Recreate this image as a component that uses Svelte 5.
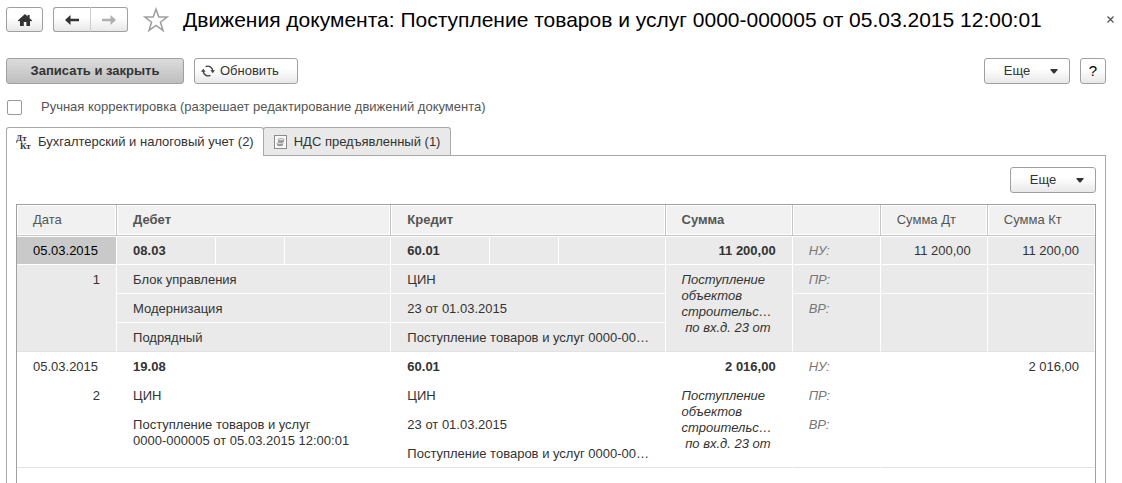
<script lang="ts">
    type Entry = {
        num: number;
        date: string;
        debit: string[];
        credit: string[];
        sum: string;
        comment: string;
        sumDt: string;
        sumKt: string;
    };

    const comment = "Поступление\nобъектов\nстроительс…\n по вх.д. 23 от";

    const entries: Entry[] = [
        {
            num: 1,
            date: "05.03.2015",
            debit: ["08.03", "Блок управления", "Модернизация", "Подрядный"],
            credit: [
                "60.01",
                "ЦИН",
                "23 от 01.03.2015",
                "Поступление товаров и услуг 0000-00…",
            ],
            sum: "11 200,00",
            comment,
            sumDt: "11 200,00",
            sumKt: "11 200,00",
        },
        {
            num: 2,
            date: "05.03.2015",
            debit: [
                "19.08",
                "ЦИН",
                "Поступление товаров и услуг\n0000-000005 от 05.03.2015 12:00:01",
            ],
            credit: [
                "60.01",
                "ЦИН",
                "23 от 01.03.2015",
                "Поступление товаров и услуг 0000-00…",
            ],
            sum: "2 016,00",
            comment,
            sumDt: "",
            sumKt: "2 016,00",
        },
    ];

    let manual = $state(false);
    let tab = $state(0);
    let selected = $state(1);
</script>

{#snippet more()}
    <button type="button" class="btn more">
        Еще
        <svg width="8" height="5" viewBox="0 0 8 5" aria-hidden="true">
            <path d="M0.5 0h7v1L4.5 4.5h-1L0.5 1z" fill="#333" />
        </svg>
    </button>
{/snippet}

<div class="page">
    <header class="titlebar">
        <button type="button" class="btn home" aria-label="Домой">
            <svg width="16" height="14" viewBox="0 0 16 14">
                <path
                    d="M8 1 0.8 7.6 2 8.6 3 7.8V13h3.8V9h2.6v4H13V7.8l1 .8 1.2-1L12.6 5.2V2h-2v1.4z"
                    fill="#333"
                />
            </svg>
        </button>
        <div class="nav">
            <button type="button" class="btn" aria-label="Назад">
                <svg width="16" height="12" viewBox="0 0 16 12">
                    <path d="M1 6 6.5 1 6.5 4.8H15V7.2H6.5V11z" fill="#333" />
                </svg>
            </button>
            <button type="button" class="btn" aria-label="Вперед">
                <svg width="16" height="12" viewBox="0 0 16 12">
                    <path d="M15 6 9.5 1V4.8H1V7.2H9.5V11z" fill="#b0b0b0" />
                </svg>
            </button>
        </div>
        <button type="button" class="plain star" aria-label="В избранное">
            <svg width="26" height="26" viewBox="0 0 26 26">
                <path
                    d="M13 2.2 15.8 10H24L17.5 15.2 20 23.4 13 18.4 6 23.4 8.5 15.2 2 10H10.2z"
                    fill="#fff"
                    stroke="#a0a0a0"
                    stroke-width="1.6"
                />
            </svg>
        </button>
        <h1>
            Движения документа: Поступление товаров и услуг 0000-000005 от
            05.03.2015 12:00:01
        </h1>
        <button type="button" class="plain close" aria-label="Закрыть">
            <svg width="7" height="7" viewBox="0 0 7 7">
                <path d="M.5.5l6 6M6.5.5l-6 6" stroke="#555" stroke-width="1.3" />
            </svg>
        </button>
    </header>

    <div class="content">
        <div class="toolbar">
            <button type="button" class="btn save">Записать и закрыть</button>
            <button type="button" class="btn refresh">
                <svg width="14" height="12" viewBox="0 0 14 12" aria-hidden="true">
                    <path
                        d="M4.6 1.7A5 5 0 0 1 11.8 6M9.4 10.3A5 5 0 0 1 2.2 6"
                        fill="none"
                        stroke="#444"
                        stroke-width="1.4"
                    />
                    <path d="M9.4 5.2H14L11.7 8.2zM0 6.8H4.6L2.3 3.8z" fill="#444" />
                </svg>
                Обновить
            </button>
            <span class="spacer"></span>
            {@render more()}
            <button type="button" class="btn help">?</button>
        </div>

        <label class="manual">
            <input type="checkbox" bind:checked={manual} />
            <span>
                Ручная корректировка (разрешает редактирование движений
                документа)
            </span>
        </label>

        <div class="tabs" role="tablist">
            <button
                type="button"
                role="tab"
                class="tab"
                class:active={tab === 0}
                aria-selected={tab === 0}
                onclick={() => (tab = 0)}
            >
                <svg width="16" height="16" viewBox="0 0 16 16" aria-hidden="true">
                    <text class="dtkt" x="0" y="7">Дт</text>
                    <text class="dtkt" x="4" y="15">Кт</text>
                </svg>
                Бухгалтерский и налоговый учет (2)
            </button>
            <button
                type="button"
                role="tab"
                class="tab"
                class:active={tab === 1}
                aria-selected={tab === 1}
                onclick={() => (tab = 1)}
            >
                <svg width="13" height="14" viewBox="0 0 13 14" aria-hidden="true">
                    <rect x=".5" y=".5" width="12" height="13" fill="#f8f8f8" stroke="#8c8c8c" />
                    <path d="M3 8.5v1.6c0 1.6 6 1.6 6 0V8.5z" fill="#999" />
                    <ellipse cx="6" cy="8.4" rx="3" ry="1.1" fill="#ddd" stroke="#888" stroke-width=".6" />
                    <path d="M4 4.5v2c0 1.6 6 1.6 6 0v-2z" fill="#999" />
                    <ellipse cx="7" cy="4.6" rx="3" ry="1.2" fill="#e4e4e4" stroke="#888" stroke-width=".6" />
                </svg>
                НДС предъявленный (1)
            </button>
        </div>

        <main class="panel">
            <div class="panel-bar">{@render more()}</div>

            <div class="grid">
                <table>
                    <colgroup>
                        <col class="c-date" />
                        <col class="c-acc" />
                        <col class="c-qty" />
                        <col class="c-cur" />
                        <col class="c-acc" />
                        <col class="c-qty" />
                        <col class="c-cur" />
                        <col class="c-sum" />
                        <col class="c-kind" />
                        <col class="c-tax" />
                        <col class="c-tax" />
                    </colgroup>
                    <thead>
                        <tr>
                            <th>Дата</th>
                            <th class="main" colspan="3">Дебет</th>
                            <th class="main" colspan="3">Кредит</th>
                            <th class="main">Сумма</th>
                            <th></th>
                            <th>Сумма Дт</th>
                            <th>Сумма Кт</th>
                        </tr>
                    </thead>
                    {#each entries as e}
                        <tbody
                            class:selected={selected === e.num}
                            onclick={() => (selected = e.num)}
                        >
                            <tr>
                                <td class="date">{e.date}</td>
                                <td class="bold">{e.debit[0]}</td>
                                <td></td>
                                <td></td>
                                <td class="bold">{e.credit[0]}</td>
                                <td></td>
                                <td></td>
                                <td class="bold num">{e.sum}</td>
                                <td class="kind">НУ:</td>
                                <td class="num">{e.sumDt}</td>
                                <td class="num">{e.sumKt}</td>
                            </tr>
                            <tr>
                                <td class="num" rowspan="3">{e.num}</td>
                                <td colspan="3">{e.debit[1]}</td>
                                <td colspan="3">{e.credit[1]}</td>
                                <td class="comment" rowspan="3">{e.comment}</td>
                                <td class="kind">ПР:</td>
                                <td></td>
                                <td></td>
                            </tr>
                            <tr>
                                <td colspan="3" rowspan={e.debit[3] ? 1 : 2}>{e.debit[2]}</td>
                                <td colspan="3">{e.credit[2]}</td>
                                <td class="kind" rowspan="2">ВР:</td>
                                <td rowspan="2"></td>
                                <td rowspan="2"></td>
                            </tr>
                            <tr>
                                {#if e.debit[3]}
                                    <td colspan="3">{e.debit[3]}</td>
                                {/if}
                                <td colspan="3">{e.credit[3]}</td>
                            </tr>
                        </tbody>
                    {/each}
                </table>
            </div>
        </main>
    </div>
</div>

<style>
    :global(body) {
        margin: 0;
        background: #fff;
        color: #333;
        font: 13px/16px "Liberation Sans", Arial, sans-serif;
    }

    .page {
        display: flex;
        flex-direction: column;
        min-height: 100vh;
        box-sizing: border-box;
        padding: 7px 8px 0 6px;
    }

    .titlebar {
        display: flex;
        align-items: center;
        height: 25px;
    }

    h1 {
        flex: 1;
        margin: 0 0 0 14px;
        color: #000;
        font-size: 21px;
        font-weight: 400;
        line-height: 24px;
        white-space: nowrap;
    }

    button {
        font: inherit;
        color: inherit;
        cursor: pointer;
    }

    .plain {
        display: flex;
        padding: 0;
        border: none;
        background: none;
    }

    .btn {
        display: flex;
        align-items: center;
        justify-content: center;
        box-sizing: border-box;
        height: 26px;
        padding: 0;
        border: 1px solid #a0a0a0;
        border-radius: 3px;
        background: linear-gradient(#fff 40%, #e8e8e8);
        white-space: nowrap;
    }

    .home {
        width: 37px;
        height: 25px;
    }

    .nav {
        display: flex;
        margin-left: 10px;
    }

    .nav .btn {
        width: 37px;
        height: 25px;
    }

    .nav .btn:first-child {
        width: 38px;
        border-right-color: #ccc;
        border-radius: 3px 0 0 3px;
    }

    .nav .btn:last-child {
        border-left: none;
        border-radius: 0 3px 3px 0;
    }

    .star {
        margin-left: 15px;
    }

    .content {
        display: flex;
        flex: 1;
        flex-direction: column;
        margin-right: 8px;
    }

    .toolbar {
        display: flex;
        gap: 10px;
        margin-top: 26px;
    }

    .save {
        width: 178px;
        background: linear-gradient(#dcdcdc, #bebebe);
        font-weight: 700;
    }

    .refresh {
        justify-content: flex-start;
        gap: 5px;
        width: 104px;
        padding-left: 6px;
    }

    .spacer {
        flex: 1;
    }

    .more {
        gap: 20px;
        width: 86px;
        padding-left: 8px;
    }

    .help {
        width: 26px;
        color: #000;
        font-size: 15px;
    }

    .manual {
        display: flex;
        align-items: center;
        gap: 19px;
        align-self: flex-start;
        margin-top: 15px;
        color: #555;
    }

    .manual input {
        appearance: none;
        box-sizing: border-box;
        width: 15px;
        height: 15px;
        margin: 0 0 0 1px;
        border: 1px solid #999;
        border-radius: 2px;
        background: #fff;
    }

    .manual input:checked {
        background: #999;
    }

    .tabs {
        display: flex;
        margin-top: 12px;
    }

    .tab {
        display: flex;
        align-items: center;
        gap: 7px;
        box-sizing: border-box;
        height: 28px;
        margin-right: -1px;
        padding: 0 10px;
        border: 1px solid #a9a9a9;
        border-bottom: none;
        border-radius: 3px 3px 0 0;
        background: #e9e9e9;
        white-space: nowrap;
    }

    /* covers the top border of the panel */
    .tab.active {
        position: relative;
        gap: 6px;
        height: 29px;
        margin-bottom: -1px;
        padding: 0 9px;
        background: #fff;
    }

    .dtkt {
        fill: #333;
        font: bold 9px "Liberation Serif", serif;
    }

    .panel {
        flex: 1;
        display: flex;
        flex-direction: column;
        padding: 11px 9px 0;
        border: 1px solid #a9a9a9;
        border-bottom: none;
    }

    .panel-bar {
        display: flex;
        justify-content: flex-end;
        margin-bottom: 11px;
    }

    .grid {
        flex: 1;
        border: 1px solid #a0a0a0;
        border-bottom: none;
    }

    table {
        width: 100%;
        border-spacing: 0;
        table-layout: fixed;
    }

    .c-date {
        width: 100px;
    }

    .c-acc {
        width: 99px;
    }

    .c-qty {
        width: 69px;
    }

    .c-cur {
        width: 106px;
    }

    .c-sum {
        width: 127px;
    }

    .c-kind {
        width: 88px;
    }

    .c-tax {
        width: 107px;
    }

    th,
    td {
        box-sizing: border-box;
        text-align: left;
        vertical-align: top;
        white-space: pre;
    }

    th {
        height: 31px;
        padding: 7px 16px;
        border-right: 1px solid #c6c6c6;
        border-bottom: 1px solid #c6c6c6;
        background: #f1f1f1;
        box-shadow: inset 0 0 0 1px #fff;
        color: #555;
        font-weight: 400;
    }

    th:last-child,
    td.num:last-child {
        border-right: none;
    }

    th.main {
        font-weight: 700;
    }

    td {
        height: 29px;
        padding: 7px 16px 5px;
        border-right: 1px solid #fff;
        border-bottom: 1px solid #fff;
    }

    /* white gap under the header */
    thead + tbody tr:first-child td {
        box-shadow: inset 0 1px #fff;
    }

    tr:last-child td,
    td[rowspan="2"],
    td[rowspan="3"] {
        border-bottom-color: #e2e2e2;
    }

    .selected td {
        background: #eaeaea;
    }

    .selected .date {
        background: #c9c9c9;
        color: #000;
    }

    .bold {
        font-weight: 700;
    }

    .num {
        text-align: right;
    }

    .kind {
        color: #777;
        font-style: italic;
    }

    .comment {
        font-style: italic;
    }
</style>
